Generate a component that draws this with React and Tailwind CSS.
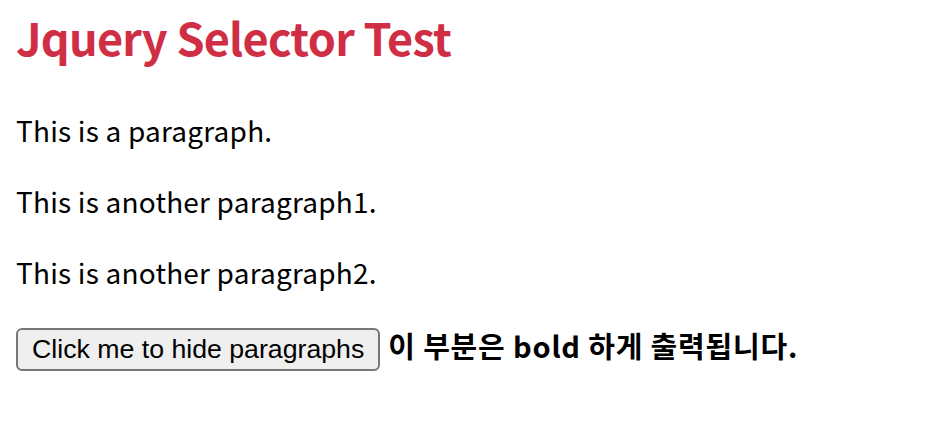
export default function App() {
  return (
    <div className="min-h-screen bg-white px-4 pt-[10px] text-black">
      <h1 className="text-[45px] leading-[54px] font-semibold tracking-[-0.75px] text-[#cf2e44] font-['Noto_Sans_CJK_KR','Noto_Sans',sans-serif]">
        Jquery Selector Test
      </h1>
      <div className="mt-[49px] flex flex-col gap-[37px] text-[28px] leading-[34px] tracking-[0.2px] font-['Noto_Sans_CJK_KR','Noto_Sans',sans-serif]">
        <p>This is a paragraph.</p>
        <p>This is another paragraph1.</p>
        <p>This is another paragraph2.</p>
      </div>
      <div className="mt-[39px] flex items-baseline gap-[8px]">
        <button className="h-[43px] rounded-[6px] border-2 border-[#767676] bg-[#efefef] px-[14px] text-[26.7px] leading-none text-black font-['Liberation_Sans',Arial,sans-serif]">
          Click me to hide paragraphs
        </button>
        <span className="text-[29px] font-bold leading-[34px] tracking-[0.8px] font-['Noto_Sans_CJK_KR',sans-serif]">
          이 부분은 bold 하게 출력됩니다.
        </span>
      </div>
    </div>
  );
}
